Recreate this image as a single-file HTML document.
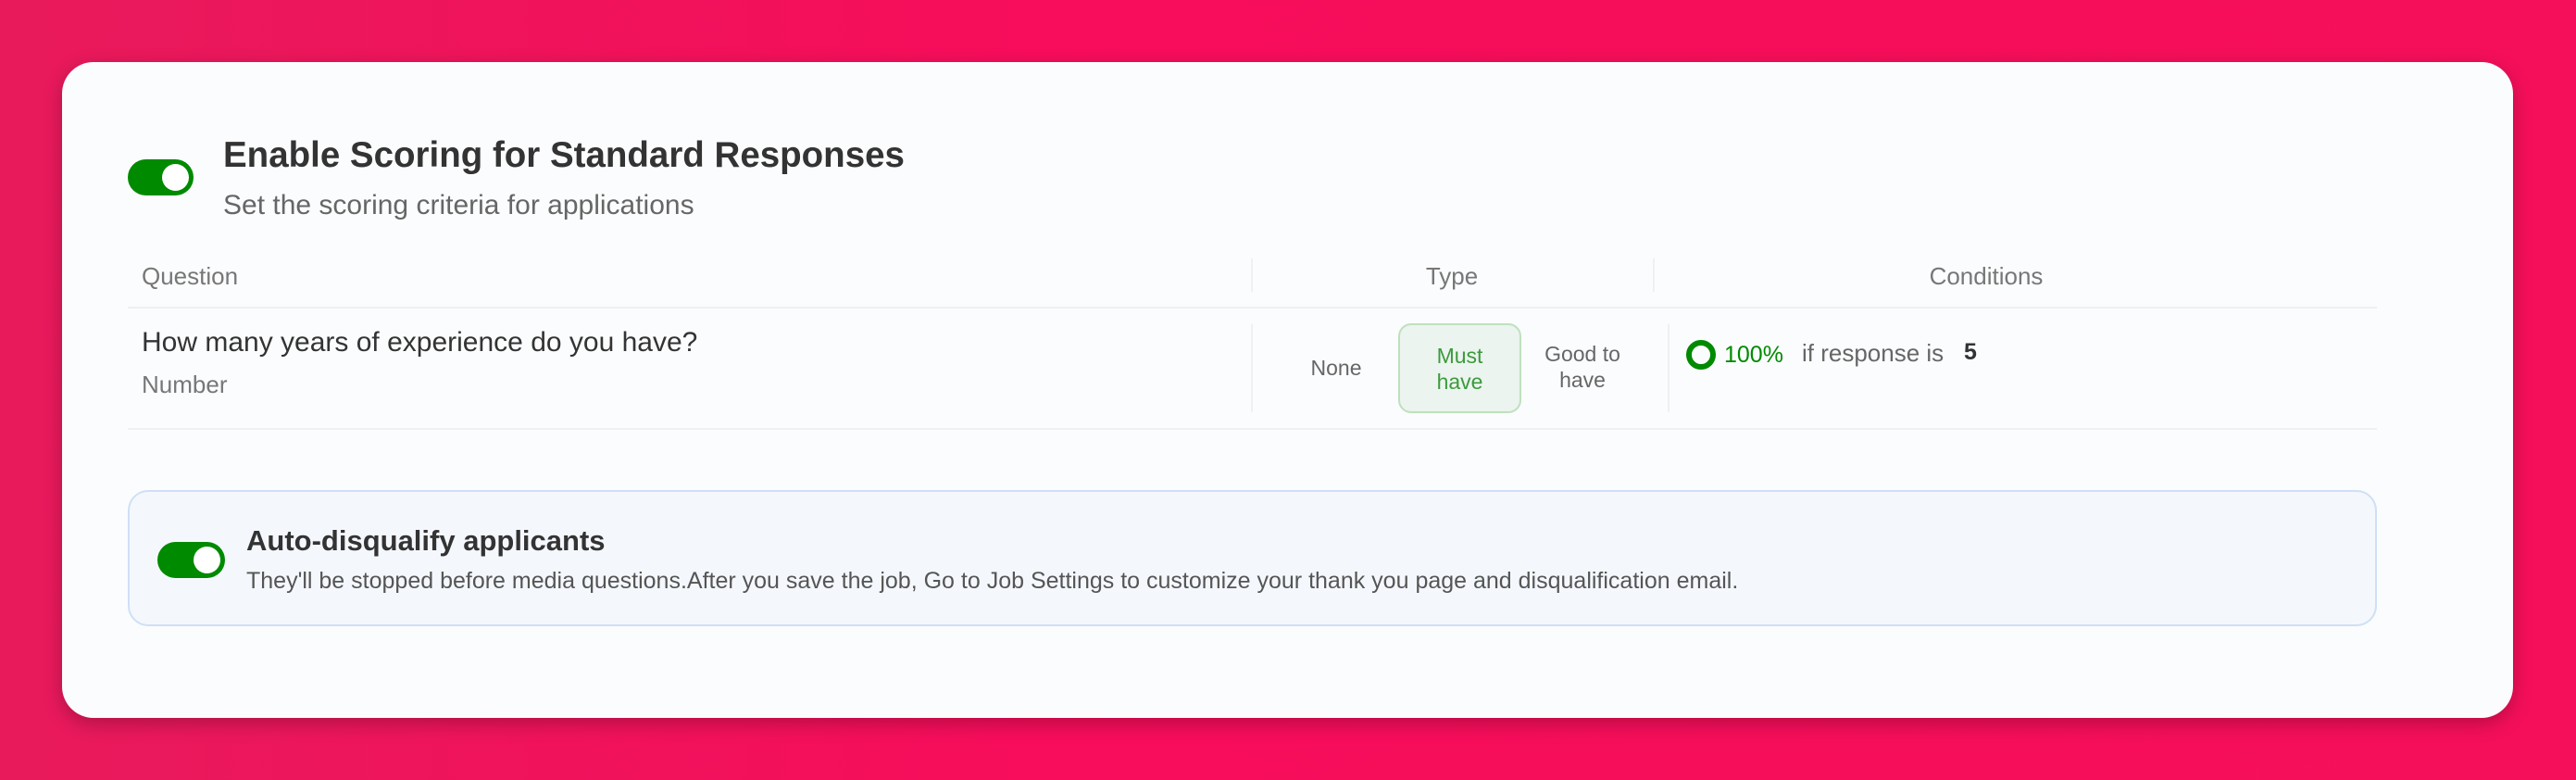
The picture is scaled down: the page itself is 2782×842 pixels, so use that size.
<!DOCTYPE html>
<html><head><style>
*{margin:0;padding:0;box-sizing:border-box}
body{width:2782px;height:842px;overflow:hidden;background:linear-gradient(90deg,#e81a5c,#f70d5b 40%,#f50f5a);font-family:"Liberation Sans",sans-serif;position:relative}
.card{position:absolute;left:67px;top:67px;width:2647px;height:708px;background:#fbfcfe;border-radius:34px;box-shadow:0 6px 20px rgba(0,0,0,.25)}
.abs{position:absolute;white-space:nowrap}
.tog{position:absolute;background:#008a00;border-radius:20px}
.tog i{position:absolute;background:#fff;border-radius:50%}
.line{position:absolute;height:2px;background:#eef0f2}
.vl{position:absolute;width:2px;background:#eef0f2}
</style></head><body>
<div class="card"></div>
<div class="tog" style="left:138px;top:172px;width:71px;height:39px"><i style="right:5px;top:5px;width:29px;height:29px"></i></div>
<div class="abs" style="left:241px;top:146px;font-size:38.5px;font-weight:bold;color:#333">Enable Scoring for Standard Responses</div>
<div class="abs" style="left:241px;top:205px;font-size:30px;color:#666">Set the scoring criteria for applications</div>
<div class="abs" style="left:153px;top:283px;font-size:26px;color:#777">Question</div>
<div class="abs" style="left:1568px;top:283px;font-size:26px;color:#777;transform:translateX(-50%)">Type</div>
<div class="abs" style="left:2145px;top:283px;font-size:26px;color:#777;transform:translateX(-50%)">Conditions</div>
<div class="vl" style="left:1351px;top:279px;height:36px"></div>
<div class="vl" style="left:1785px;top:279px;height:36px"></div>
<div class="line" style="left:138px;top:331px;width:2429px"></div>
<div class="abs" style="left:153px;top:353px;font-size:30px;color:#333">How many years of experience do you have?</div>
<div class="abs" style="left:153px;top:400px;font-size:26px;color:#777">Number</div>
<div class="vl" style="left:1351px;top:350px;height:95px"></div>
<div class="vl" style="left:1801px;top:350px;height:95px"></div>
<div class="abs" style="left:1443px;top:384px;font-size:23px;color:#666;transform:translateX(-50%)">None</div>
<div class="abs" style="left:1510px;top:349px;width:133px;height:97px;border:2px solid #bfe0bf;background:#ebf4ee;border-radius:14px;color:#3c9a3c;font-size:23px;text-align:center;line-height:28px;padding-top:19px;white-space:normal">Must<br>have</div>
<div class="abs" style="left:1709px;top:368px;font-size:23px;color:#666;text-align:center;line-height:28px;transform:translateX(-50%)">Good to<br>have</div>
<div class="abs" style="left:1821px;top:367px;width:32px;height:32px;border:6px solid #008a00;border-radius:50%"></div>
<div class="abs" style="left:1862px;top:369px;font-size:25px;color:#008a00">100%</div>
<div class="abs" style="left:1946px;top:366px;font-size:26px;color:#666">if response is</div>
<div class="abs" style="left:2121px;top:366px;font-size:25px;font-weight:bold;color:#333">5</div>
<div class="line" style="left:138px;top:462px;width:2429px"></div>
<div class="abs" style="left:138px;top:529px;width:2429px;height:147px;background:#f4f8fd;border:2px solid #cfe0f5;border-radius:22px"></div>
<div class="tog" style="left:170px;top:585px;width:73px;height:39px"><i style="right:5px;top:5px;width:29px;height:29px"></i></div>
<div class="abs" style="left:266px;top:566px;font-size:31px;font-weight:bold;color:#333">Auto-disqualify applicants</div>
<div class="abs" style="left:266px;top:613px;font-size:25px;color:#555">They'll be stopped before media questions.After you save the job, Go to Job Settings to customize your thank you page and disqualification email.</div>
</body></html>
